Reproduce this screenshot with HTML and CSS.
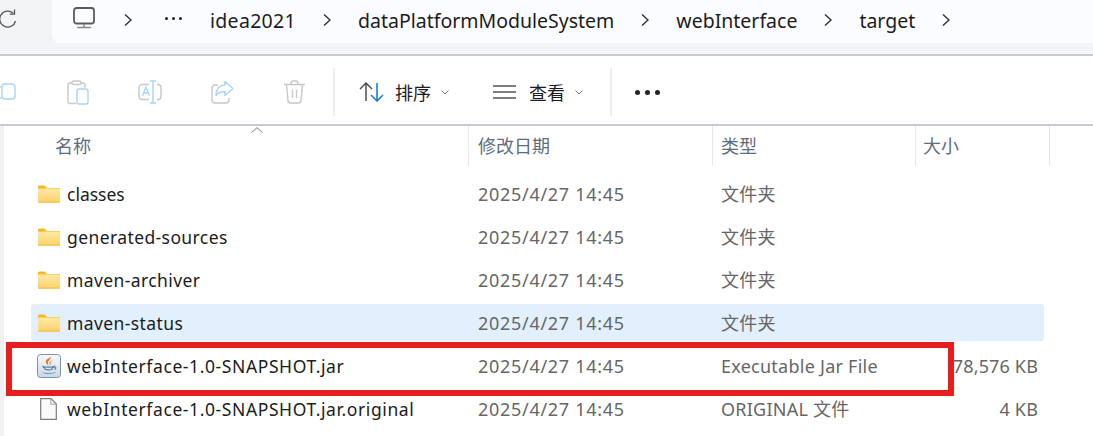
FILE: index.html
```html
<!DOCTYPE html>
<html lang="zh">
<head>
<meta charset="utf-8">
<title>target</title>
<link rel="stylesheet" href="styles.css">
</head>
<body>
<svg class="defs" width="0" height="0">
  <defs>
    <linearGradient id="fg" x1="0" y1="0" x2="0" y2="1"><stop offset="0" stop-color="#ffe9a6"/><stop offset="1" stop-color="#fbd26a"/></linearGradient>
    <linearGradient id="jg" x1="0" y1="0" x2="0" y2="1"><stop offset="0" stop-color="#f6f9fc"/><stop offset="1" stop-color="#c9d8e6"/></linearGradient>
    <symbol id="folder" viewBox="0 0 23 18">
      <path d="M0.5 2a1.5 1.5 0 0 1 1.5-1.500h5l2.500 2.500h13v2h-22z" fill="#f9b81e"/>
      <rect x="0.500" y="3.500" width="22" height="14" rx="0.800" fill="url(#fg)"/>
      <rect x="0.500" y="16.600" width="22" height="1" fill="#f4b93a"/>
    </symbol>
    <symbol id="chev" viewBox="0 0 8 14">
      <path d="M1 1.500l6 5.500-6 5.500" fill="none" stroke="#303030" stroke-width="1.400"/>
    </symbol>
  </defs>
</svg>

<header class="addressbar">
  <svg class="refresh" width="17" height="20" viewBox="0 0 17 20"><path d="M15.500 12A8 8 0 1 1 13.200 4.300" fill="none" stroke="#555" stroke-width="1.300"/><path d="M14.500 0.500V5.200H9.800" fill="none" stroke="#555" stroke-width="1.300"/></svg>
  <nav class="crumbs">
    <svg class="monitor" width="22" height="22" viewBox="0 0 22 22"><rect x="1" y="1" width="20" height="15.500" rx="2.500" fill="none" stroke="#5c5c5c" stroke-width="1.800"/><path d="M11 17v3M4 20.500h14" fill="none" stroke="#8a8a8a" stroke-width="1.600"/></svg>
    <svg class="chev chev-first" width="8" height="14"><use href="#chev"/></svg>
    <span class="crumb-dots"><i></i><i></i><i></i></span>
    <span class="crumb crumb-idea">idea2021</span>
    <svg class="chev" width="8" height="14"><use href="#chev"/></svg>
    <span class="crumb">dataPlatformModuleSystem</span>
    <svg class="chev" width="8" height="14"><use href="#chev"/></svg>
    <span class="crumb">webInterface</span>
    <svg class="chev" width="8" height="14"><use href="#chev"/></svg>
    <span class="crumb">target</span>
    <svg class="chev" width="8" height="14"><use href="#chev"/></svg>
  </nav>
</header>

<section class="toolbar">
  <svg class="tool tool-copy" width="17" height="24" viewBox="0 0 17 24"><rect x="3" y="4" width="13" height="15" rx="3" fill="none" stroke="#a9d4f5" stroke-width="1.400"/><path d="M2.500 18.500C1 18 0 17.500 0 16.500M0 7h2" fill="none" stroke="#c8c8c8" stroke-width="1.400"/></svg>
  <svg class="tool tool-paste" width="22" height="25" viewBox="0 0 22 25"><path d="M9 23.500H3a2 2 0 0 1-2-2V5a2 2 0 0 1 2-2h2M14 3h2a2 2 0 0 1 2 2v3" fill="none" stroke="#c8c8c8" stroke-width="1.400"/><rect x="5" y="1" width="9" height="3.500" rx="1.500" fill="none" stroke="#c8c8c8" stroke-width="1.400"/><rect x="10" y="9" width="11" height="15" rx="2" fill="none" stroke="#a9d4f5" stroke-width="1.400"/></svg>
  <svg class="tool tool-rename" width="24" height="24" viewBox="0 0 24 24"><path d="M11 4.500H4a3 3 0 0 0-3 3v9a3 3 0 0 0 3 3h7M19 4.500h1a3 3 0 0 1 3 3v9a3 3 0 0 1-3 3h-1" fill="none" stroke="#c8c8c8" stroke-width="1.400"/><path d="M15 1v22M12 1h6M12 23h6" fill="none" stroke="#a9d4f5" stroke-width="1.400"/><path d="M4.500 16l3.500-9 3.500 9M5.800 13h4.400" fill="none" stroke="#a9d4f5" stroke-width="1.300"/></svg>
  <svg class="tool tool-share" width="23" height="24" viewBox="0 0 23 24"><path d="M7 5H4a3 3 0 0 0-3 3v12a3 3 0 0 0 3 3h11a3 3 0 0 0 3-3v-2" fill="none" stroke="#c8c8c8" stroke-width="1.400"/><path d="M14 1.500l8 7-8 7v-4c-4 0-7 1-9 4 0-6 3-10 9-10.500z" fill="none" stroke="#a9d4f5" stroke-width="1.400" stroke-linejoin="round"/></svg>
  <svg class="tool tool-delete" width="21" height="24" viewBox="0 0 21 24"><path d="M0 4.500h21M7 4.500V3a2 2 0 0 1 2-2h3a2 2 0 0 1 2 2v1.500M2.500 4.500l1.500 16a2.500 2.500 0 0 0 2.500 2.500h8a2.500 2.500 0 0 0 2.500-2.500l1.500-16M8.500 9.500v8.500M12.500 9.500v8.500" fill="none" stroke="#c8c8c8" stroke-width="1.400"/></svg>
  <span class="tool-sep"></span>
  <svg class="sort-icon" width="25" height="20" viewBox="0 0 25 20"><path d="M7 19V1.500M1 7l6-6 6 6" fill="none" stroke="#444" stroke-width="1.400"/><path d="M18 1v17.500M12 13l6 6 6-6" fill="none" stroke="#1a7fd4" stroke-width="1.600"/></svg>
  <span class="tool-label">排序</span>
  <svg class="caret" width="8" height="5" viewBox="0 0 8 5"><path d="M0.500 0.500L4 4l3.500-3.500" fill="none" stroke="#777" stroke-width="1"/></svg>
  <svg class="view-icon" width="23" height="14" viewBox="0 0 23 14"><path d="M0 1h23M0 7h23M0 13h23" fill="none" stroke="#555" stroke-width="1.300"/></svg>
  <span class="tool-label">查看</span>
  <svg class="caret caret-last" width="8" height="5" viewBox="0 0 8 5"><path d="M0.500 0.500L4 4l3.500-3.500" fill="none" stroke="#777" stroke-width="1"/></svg>
  <span class="tool-sep tool-sep-second"></span>
  <span class="more"><i></i><i></i><i></i></span>
</section>

<main class="pane">
  <div class="columns">
    <span class="col col-name">名称</span>
    <span class="col col-date">修改日期</span>
    <span class="col col-type">类型</span>
    <span class="col col-size">大小</span>
    <svg class="sort-arrow" width="12" height="6" viewBox="0 0 12 6"><path d="M0.500 5.500L6 0.700l5.500 4.800" fill="none" stroke="#777" stroke-width="1"/></svg>
  </div>
  <div class="list">
    <div class="row">
      <span class="name name-tight"><svg class="ficon" width="23" height="18"><use href="#folder"/></svg>classes</span>
      <span class="date">2025/4/27 14:45</span><span class="type type-cjk">文件夹</span><span class="size"></span>
    </div>
    <div class="row">
      <span class="name"><svg class="ficon" width="23" height="18"><use href="#folder"/></svg>generated-sources</span>
      <span class="date">2025/4/27 14:45</span><span class="type type-cjk">文件夹</span><span class="size"></span>
    </div>
    <div class="row">
      <span class="name"><svg class="ficon" width="23" height="18"><use href="#folder"/></svg>maven-archiver</span>
      <span class="date">2025/4/27 14:45</span><span class="type type-cjk">文件夹</span><span class="size"></span>
    </div>
    <div class="row row-hover">
      <span class="name"><svg class="ficon" width="23" height="18"><use href="#folder"/></svg>maven-status</span>
      <span class="date">2025/4/27 14:45</span><span class="type type-cjk">文件夹</span><span class="size"></span>
    </div>
    <div class="row">
      <span class="name name-long"><svg class="ficon" width="24" height="24" viewBox="0 0 24 24"><rect x="0.500" y="0.500" width="23" height="23" rx="3" fill="url(#jg)" stroke="#7d93a8"/><path d="M13.500 2.500c1.500 2.500-3.500 4-2.500 7.500.3 1 1 1.500 1 1.500-2.500-1-3.800-3-3-5 .7-1.800 4-2 4.500-4zM16 6.500c-2 1-3 2-2.500 3.800.2.700.5 1 .5 1-1.300-.5-2-1.800-1.500-3 .5-1 2-1.500 3.500-1.800z" fill="#e8761f"/><path d="M6 12.500c2 .8 9 .8 11 0-.5 1-1.500 1.500-2 1.700v1c-1 1-6 1-7 0v-1c-.8-.3-1.700-.8-2-1.700zM17 13c2-.5 2.500 1.500.5 2.500" fill="none" stroke="#5b7f9e" stroke-width="1.200"/><path d="M5 18c3 1.500 10 1.500 14 0-1 2-12 3-14 0z" fill="#5b7f9e"/></svg>webInterface-1.0-SNAPSHOT.jar</span>
      <span class="date">2025/4/27 14:45</span><span class="type">Executable Jar File</span><span class="size">78,576 KB</span>
    </div>
    <div class="row">
      <span class="name name-long"><svg class="ficon ficon-file" width="17" height="22" viewBox="0 0 17 22"><path d="M0.700 0.700H11l5.300 5.300v15.300H0.700z" fill="#fafafa" stroke="#7d7d7d" stroke-width="1.200"/><path d="M10.800 0.700V6.200h5.500" fill="none" stroke="#a5a5a5" stroke-width="1"/></svg>webInterface-1.0-SNAPSHOT.jar.original</span>
      <span class="date">2025/4/27 14:45</span><span class="type type-cjk">ORIGINAL 文件</span><span class="size">4 KB</span>
    </div>
  </div>
  <div class="highlight"></div>
</main>
</body>
</html>
```
FILE: styles.css
```css
* { box-sizing: border-box; }
html, body { margin: 0; height: 100%; }
body {
  width: 1093px;
  height: 436px;
  overflow: hidden;
  background: #fff;
  font-family: "Noto Sans", "Noto Sans CJK SC", sans-serif;
  font-size: 17.5px;
  position: relative;
}
.defs { position: absolute; }

.addressbar {
  height: 56px;
  background: #f3f4f6;
  border-bottom: 2px solid #c6cad4;
  display: flex;
  align-items: flex-start;
}
.refresh { margin: 9px 35px 0 0; flex: none; }
.crumbs {
  flex: 1;
  height: 43px;
  background: #fbfcff;
  border-bottom-left-radius: 8px;
  display: flex;
  align-items: center;
  gap: 27px;
  padding: 0 0 3px 21px;
  color: #1c1c1c;
  font-size: 19.5px;
  white-space: nowrap;
}
.monitor { margin-bottom: 5px; }
.chev-first { margin-left: 2px; margin-right: 6px; }
.crumb-dots { display: flex; gap: 4px; margin-bottom: 4px; margin-right: 1px; }
.crumb-dots i { width: 3px; height: 3px; border-radius: 50%; background: #222; display: block; }
.crumb-idea { letter-spacing: 0.3px; }

.toolbar {
  height: 70px;
  border-bottom: 2px solid #c6cad4;
  display: flex;
  align-items: center;
  padding-top: 4px;
  color: #1c1c1c;
}
.tool { flex: none; }
.tool-copy { margin-right: 51px; margin-left: -1px; }
.tool-paste { margin-right: 49px; }
.tool-rename { margin-right: 49px; }
.tool-share { margin-right: 50px; }
.tool-delete { margin-right: 28px; }
.tool-sep { width: 2px; height: 48px; background: #ececec; flex: none; margin-right: 24px; }
.tool-sep-second { margin-right: 23px; }
.sort-icon { margin-right: 11px; }
.tool-label { font-size: 18px; margin-right: 10px; }
.caret { margin-right: 44px; }
.caret-last { margin-right: 27px; }
.view-icon { margin-right: 13px; }
.more { display: flex; gap: 5px; }
.more i { width: 5px; height: 5px; border-radius: 50%; background: #222; display: block; }

.pane { position: relative; height: 310px; border-left: 4px solid #f1f1f1; }
.columns {
  height: 40px;
  position: relative;
  display: grid;
  grid-template-columns: 465px 244px 203px 134px;
  color: #5e6c80;
  font-size: 18px;
}
.col { display: flex; align-items: center; border-right: 1px solid #e6e6e6; height: 40px; padding-bottom: 2px; }
.col-name { padding-left: 51px; }
.col-date { padding-left: 9px; }
.col-type { padding-left: 8px; }
.col-size { padding-left: 7px; }
.sort-arrow { position: absolute; left: 247px; top: 1px; }

.list {
  padding-top: 9px;
  margin-left: 27px;
  width: 1013px;
  display: flex;
  flex-direction: column;
  gap: 6px;
}
.row {
  height: 37px;
  display: grid;
  grid-template-columns: 437px 244px 203px 129px;
  align-items: center;
  border-radius: 3px;
  white-space: nowrap;
  color: #666;
}
.row-hover { background: #e1f0fc; }
.name { display: flex; align-items: center; color: #1c1c1c; padding-left: 6px; letter-spacing: 0.4px; }
.name-tight { letter-spacing: 0; }
.name-long { letter-spacing: 0.6px; }
.ficon { width: 24px; flex: none; margin-right: 6px; }
.ficon-file { margin-left: 3px; margin-right: 10px; width: 17px; }
.date { padding-left: 10px; font-size: 18px; letter-spacing: 0.7px; }
.type { padding-left: 9px; font-size: 18px; letter-spacing: 0.25px; }
.type-cjk { padding-bottom: 2px; }
.size { text-align: right; padding-right: 6px; font-size: 18px; letter-spacing: 0.15px; }

.highlight {
  position: absolute;
  left: 2px;
  top: 216px;
  width: 948px;
  height: 54px;
  border: 6px solid #e61e1e;
}
```
